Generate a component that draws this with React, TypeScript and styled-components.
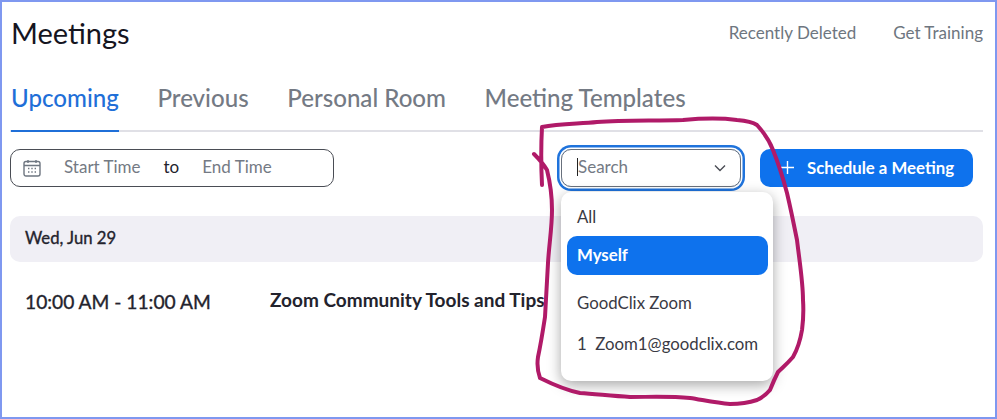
import React, { FC } from 'react';
import styled, { createGlobalStyle } from 'styled-components';

const GlobalStyle = createGlobalStyle`
  html, body { margin: 0; padding: 0; background: #fff; }
  body { font-family: Lato, "Open Sans", sans-serif; }
`;

const Frame = styled.div`
  position: relative;
  box-sizing: border-box;
  width: 997px;
  height: 419px;
  overflow: hidden;
  border: 2px solid #7f98f0;
  background: #fff;
  padding: 0 12px 0 8px;
`;

const Header = styled.div`
  display: flex;
  align-items: center;
  justify-content: space-between;
  height: 62px;
  padding: 0 0 2px 1px;
  box-sizing: border-box;
`;

const Title = styled.h1`
  margin: 0;
  font-size: 29px;
  font-weight: 400;
  color: #15151f;
`;

const HeaderLinks = styled.div`
  display: flex;
  gap: 37px;
  font-size: 17px;
  color: #6e7680;
`;

const Tabs = styled.div`
  display: flex;
  gap: 38.6px;
  height: 66px;
  border-bottom: 2px solid #e0e0e6;
  padding-left: 1px;
  margin-bottom: 17px;
`;

const Tab = styled.div<{ $active?: boolean }>`
  box-sizing: border-box;
  height: 68px;
  padding-top: 19px;
  font-size: 24.1px;
  font-weight: 500;
  color: ${({ $active }) => ($active ? '#1f6fd8' : '#747a84')};
  border-bottom: ${({ $active }) => ($active ? '2px solid #1f6fd8' : 'none')};
`;

const Toolbar = styled.div`
  display: flex;
  align-items: center;
  height: 38px;
`;

const DateRange = styled.div`
  box-sizing: border-box;
  display: flex;
  align-items: center;
  width: 324px;
  height: 38px;
  border: 1px solid #4a4d55;
  border-radius: 10px;
  padding: 0 0 1px 12px;
  font-size: 17px;
  color: #747a84;
`;

const DateText = styled.span<{ $first?: boolean }>`
  margin-left: ${({ $first }) => ($first ? '23px' : '0')};
  margin-top: -2px;
`;

const To = styled.span`
  margin: -2px 23px 0;
  color: #23232d;
`;

const SearchBox = styled.div`
  box-sizing: border-box;
  display: flex;
  align-items: center;
  justify-content: space-between;
  width: 180px;
  height: 38px;
  margin-left: 227px;
  padding: 0 14px 0 15px;
  border: 1px solid #68707c;
  border-radius: 10px;
  box-shadow: 0 0 0 1.5px #fff, 0 0 0 4px #1f73dc;
  font-size: 17px;
  color: #747a84;
`;

const SearchText = styled.span`
  margin-top: -2px;
  border-left: 1px solid #222;
  line-height: 18px;
`;

const ScheduleButton = styled.div`
  box-sizing: border-box;
  display: flex;
  align-items: center;
  justify-content: center;
  gap: 13px;
  width: 213px;
  height: 38px;
  margin-left: 19px;
  padding: 0 0 2px 2px;
  border-radius: 10px;
  background: #0e72ed;
  color: #fff;
  font-size: 16.8px;
  font-weight: 700;
`;

const DayBar = styled.div`
  box-sizing: border-box;
  display: flex;
  align-items: center;
  height: 46px;
  margin-top: 29px;
  padding: 0 0 2px 15px;
  border-radius: 10px;
  background: #f0eff5;
  font-size: 16.7px;
  font-weight: 400;
  -webkit-text-stroke: 0.35px #23232d;
  color: #23232d;
`;

const MeetingRow = styled.div`
  display: flex;
  align-items: center;
  height: 78px;
  padding-left: 15px;
  color: #23232d;
`;

const MeetingTime = styled.div`
  width: 245px;
  font-size: 19.2px;
  font-weight: 400;
  -webkit-text-stroke: 0.35px #23232d;
`;

const MeetingName = styled.div`
  margin-top: -3px;
  font-size: 19px;
  font-weight: 700;
`;

const Menu = styled.div`
  position: absolute;
  left: 559px;
  top: 190px;
  box-sizing: border-box;
  width: 212px;
  height: 189px;
  padding: 6px 5px 6px 6px;
  border-radius: 10px;
  background: #fff;
  box-shadow: 0 4px 14px rgba(0, 0, 0, 0.35);
`;

const MenuItem = styled.div<{ $selected?: boolean; $h: number }>`
  display: flex;
  align-items: center;
  height: ${({ $h }) => $h}px;
  padding: 0 0 2px 10px;
  border-radius: 10px;
  box-sizing: border-box;
  font-size: 16.8px;
  font-weight: ${({ $selected }) => ($selected ? 700 : 400)};
  color: ${({ $selected }) => ($selected ? '#fff' : '#3a3a44')};
  background: ${({ $selected }) => ($selected ? '#0e72ed' : 'transparent')};
`;

const InkLayer = styled.svg`
  position: absolute;
  left: -2px;
  top: -2px;
  pointer-events: none;
`;

const CalendarIcon: FC = () => (
  <svg width="18" height="18" viewBox="0 0 18 18" fill="none" stroke="#6e7680" strokeWidth="1.4">
    <rect x="1" y="2.5" width="16" height="14.5" rx="2" />
    <path d="M1 6.5h16M5 1v3M13 1v3" />
    <path d="M5 9.5h1.4M8.3 9.5h1.4M11.6 9.5h1.4M5 13h1.4M8.3 13h1.4M11.6 13h1.4" strokeWidth="1.6" />
  </svg>
);

const Chevron: FC = () => (
  <svg width="12" height="8" viewBox="0 0 12 8" fill="none" stroke="#4a4d55" strokeWidth="1.4">
    <path d="M1 1.5l5 5 5-5" />
  </svg>
);

const Plus: FC = () => (
  <svg width="13" height="13" viewBox="0 0 13 13" fill="none" stroke="#fff" strokeWidth="1.4">
    <path d="M6.5 0v13M0 6.5h13" />
  </svg>
);

// the hand drawn loop round the dropdown
const Ink: FC = () => (
  <InkLayer width="997" height="419" viewBox="0 0 997 419" fill="none" stroke="#b01a68" strokeWidth="4" strokeLinecap="round" strokeLinejoin="round">
    <path d="M542 185C541 165 541 145 542 127C560 123 580 124 597 122C625 120 655 121 683 120C705 118 722 118 737 120C748 121 754 123 757 125C766 135 770 142 773 150C779 165 783 178 787 193C791 210 794 225 797 240C800 265 803 283 803 300C804 315 803 322 802 330C800 342 797 350 793 357C787 364 783 367 778 372C774 380 772 385 770 390C765 396 761 398 757 400C748 403 739 404 730 404C716 403 703 400 690 398C670 396 650 397 630 397C612 396 596 394 580 393C565 390 552 384 540 378C537 370 537 364 538 357C541 343 543 330 545 317C546 298 547 280 548 263C549 245 552 228 552 210C552 195 550 182 547 170C544 165 539 159 534 154" />
  </InkLayer>
);

const App: FC = () => (
  <>
    <GlobalStyle />
    <Frame>
      <Header>
        <Title>Meetings</Title>
        <HeaderLinks>
          <span>Recently Deleted</span>
          <span>Get Training</span>
        </HeaderLinks>
      </Header>
      <Tabs>
        <Tab $active>Upcoming</Tab>
        <Tab>Previous</Tab>
        <Tab>Personal Room</Tab>
        <Tab>Meeting Templates</Tab>
      </Tabs>
      <Toolbar>
        <DateRange>
          <CalendarIcon />
          <DateText $first>Start Time</DateText>
          <To>to</To>
          <DateText>End Time</DateText>
        </DateRange>
        <SearchBox>
          <SearchText>Search</SearchText>
          <Chevron />
        </SearchBox>
        <ScheduleButton>
          <Plus />
          Schedule a Meeting
        </ScheduleButton>
      </Toolbar>
      <DayBar>Wed, Jun 29</DayBar>
      <MeetingRow>
        <MeetingTime>10:00 AM - 11:00 AM</MeetingTime>
        <MeetingName>Zoom Community Tools and Tips</MeetingName>
      </MeetingRow>
      <Menu>
        <MenuItem $h={38}>All</MenuItem>
        <MenuItem $selected $h={39}>Myself</MenuItem>
        <MenuItem $h={56}>GoodClix Zoom</MenuItem>
        <MenuItem $h={27}>1&nbsp;&nbsp;Zoom1@goodclix.com</MenuItem>
      </Menu>
      <Ink />
    </Frame>
  </>
);

export default App;
